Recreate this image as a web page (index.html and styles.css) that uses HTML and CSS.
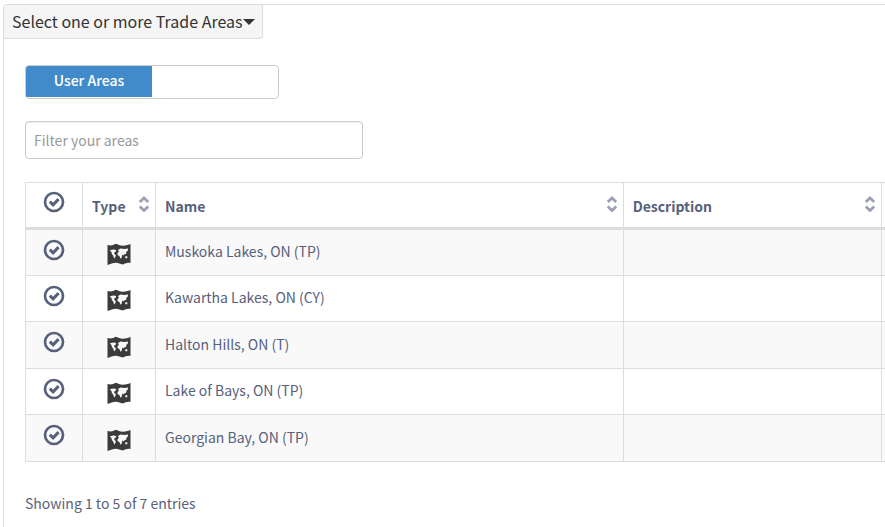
FILE: index.html
```html
<!DOCTYPE html>
<html lang="en">
<head>
<meta charset="utf-8">
<title>Trade Areas</title>
<link rel="stylesheet" href="styles.css">
</head>
<body>
<svg class="sprite" aria-hidden="true">
  <symbol id="check" viewBox="0 0 22 22">
    <circle cx="11" cy="11" r="9" fill="none" stroke="currentColor" stroke-width="2.7"/>
    <path d="M6.800 10.600l3.300 3.200 5.500-5.700" fill="none" stroke="currentColor" stroke-width="3"/>
  </symbol>
  <symbol id="sort" viewBox="0 0 12 16">
    <path d="M1.800 6L6 2l4.200 4M1.800 10.500L6 14.500l4.200-4" fill="none" stroke="currentColor" stroke-width="2.800"/>
  </symbol>
  <symbol id="map" viewBox="0 0 24 22">
    <path d="M.5 2C4 3 6 2.400 8.500 .8c3 .6 4.500 2 7.500 1.900 2.500 0 4.500-.6 7.500-1.700v19c-3-.6-5 .4-7.500 1.500-3-.4-4.500-1.800-7-1.800-3 .3-5.500 1-8.500 2.200z" fill="#3b3b3b"/>
    <path d="M2.800 7.200l3.600-.8 2.800.6-.6 1.800-1.500 1 .3 1.200 1.500 1.200-.7 2-1.100 1.300-.9-3-1.200-1.300-.6-2.200zM11 7l2.500-1.600 4 .5 3.600-.4-.4 2.300-1.300.9-.2 2-1.600.6-.8 1.300-1-1.100-.6.600-.5 2.300-1.300 1.400-1-2.700-1.900-1.200.1-2 1.300-.9zM18.300 13.200h2v2h-2z" fill="#f8f8f8"/>
  </symbol>
</svg>
<main class="panel">
  <button class="panel-title" type="button">Select one or more Trade Areas<span class="caret"></span></button>
  <div class="content">
    <div class="tabs">
      <button class="tab active" type="button">User Areas</button>
      <span class="tab"></span>
    </div>
    <input class="filter" type="text" placeholder="Filter your areas" aria-label="Filter your areas">
    <table class="areas">
      <colgroup><col class="col-check"><col class="col-type"><col><col class="col-desc"><col class="col-more"></colgroup>
      <thead>
        <tr>
          <th><button class="check" type="button" aria-label="Select all"><svg><use href="#check"/></svg></button></th>
          <th><button class="sort" type="button">Type<svg><use href="#sort"/></svg></button></th>
          <th><button class="sort" type="button">Name<svg><use href="#sort"/></svg></button></th>
          <th><button class="sort" type="button">Description<svg><use href="#sort"/></svg></button></th>
          <th></th>
        </tr>
      </thead>
      <tbody>
        <tr><td><button class="check" type="button" aria-label="Select"><svg><use href="#check"/></svg></button></td><td><svg class="map"><use href="#map"/></svg></td><td>Muskoka Lakes, ON (TP)</td><td></td><td></td></tr>
        <tr><td><button class="check" type="button" aria-label="Select"><svg><use href="#check"/></svg></button></td><td><svg class="map"><use href="#map"/></svg></td><td>Kawartha Lakes, ON (CY)</td><td></td><td></td></tr>
        <tr><td><button class="check" type="button" aria-label="Select"><svg><use href="#check"/></svg></button></td><td><svg class="map"><use href="#map"/></svg></td><td>Halton Hills, ON (T)</td><td></td><td></td></tr>
        <tr><td><button class="check" type="button" aria-label="Select"><svg><use href="#check"/></svg></button></td><td><svg class="map"><use href="#map"/></svg></td><td>Lake of Bays, ON (TP)</td><td></td><td></td></tr>
        <tr><td><button class="check" type="button" aria-label="Select"><svg><use href="#check"/></svg></button></td><td><svg class="map"><use href="#map"/></svg></td><td>Georgian Bay, ON (TP)</td><td></td><td></td></tr>
      </tbody>
    </table>
    <p class="summary">Showing 1 to 5 of 7 entries</p>
  </div>
</main>
</body>
</html>
```
FILE: styles.css
```css
* { box-sizing: border-box; }
body {
  margin: 0;
  padding: 4px 0 0 3px;
  background: #fff;
  color: #57617b;
  font: 14px/20px "Noto Sans CJK SC", "Noto Sans", sans-serif;
}
button, input { font: inherit; color: inherit; }
button { border: 0; padding: 0; background: none; cursor: pointer; }
.sprite { display: none; }
.panel {
  min-height: calc(100vh - 4px);
  border: solid #ddd;
  border-width: 1px 0 0 1px;
  border-radius: 4px 0 0 0;
}
.panel-title {
  display: flex;
  align-items: center;
  height: 34px;
  padding: 0 7px 2px 8px;
  border: solid #ddd;
  border-width: 0 1px 1px 0;
  border-radius: 4px 0 4px 0;
  background: #f5f5f5;
  color: #333;
  font-size: 16px;
}
.caret {
  margin-top: 2px;
  border: solid transparent;
  border-width: 6px 6px 0;
  border-top-color: #333;
}
.content { padding: 26px 0 0 21px; }
.tabs {
  display: flex;
  width: 254px;
  height: 34px;
  border: 1px solid #ccc;
  border-radius: 4px;
  overflow: hidden;
}
.tab { flex: 1; height: 31px; }
.active { padding-bottom: 3px; background: #428bca; color: #fff; font-weight: 500; }
.filter {
  display: block;
  width: 338px;
  height: 38px;
  margin: 22px 0 23px;
  padding: 0 8px;
  border: 1px solid #ccc;
  border-radius: 4px;
  background: #fff;
  box-shadow: inset 0 1px 1px rgba(0, 0, 0, 0.075);
}
.filter::placeholder { color: #999; opacity: 1; }
.areas {
  width: 100%;
  table-layout: fixed;
  border-collapse: collapse;
}
.col-check { width: 57px; }
.col-type { width: 73px; }
.col-desc { width: 30%; }
.col-more { width: 4px; }
th, td {
  height: 46px;
  padding: 0 9px;
  border: 1px solid #ddd;
  text-align: left;
}
td { padding-bottom: 3px; }
tr:nth-child(odd) td { height: 47px; }
th { border-bottom-width: 3px; padding-right: 5px; }
th:last-child, td:last-child { padding: 0; border-right: 0; }
th:first-child, td:first-child { padding: 0 0 7px; text-align: center; }
td:nth-child(2) { padding: 3px 0 0; text-align: center; }
tbody tr:nth-child(odd) { background: #f9f9f9; }
.check svg { display: block; width: 22px; height: 22px; }
.check { vertical-align: middle; }
.sort {
  display: flex;
  justify-content: space-between;
  align-items: center;
  width: 100%;
  padding-top: 2px;
  font-weight: 700;
}
.sort svg { width: 12px; height: 16px; margin-bottom: 4px; color: #9ba1b5; }
.map { display: block; width: 24px; height: 22px; margin: 0 auto; }
.summary { margin: 31px 0 0; }
```
